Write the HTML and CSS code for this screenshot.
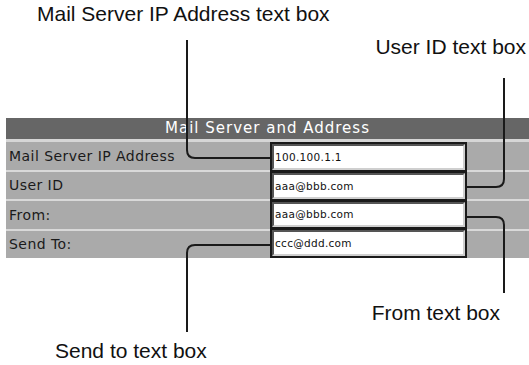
FILE: index.html
```html
<!DOCTYPE html>
<html lang="en">
<head>
  <meta charset="UTF-8">
  <title>Mail Server and Address</title>
  <link rel="stylesheet" href="styles.css">
</head>
<body>
  <div id="figure">
    <div class="callouts top">
      <div class="callout ip">Mail Server IP Address text box</div>
      <div class="callout userid">User ID text box</div>
    </div>

    <div id="panel">
      <div class="panel-title">Mail Server and Address</div>
      <div class="panel-body">
        <div class="labels">
          <div class="row">Mail Server IP Address</div>
          <div class="row">User ID</div>
          <div class="row">From:</div>
          <div class="row">Send To:</div>
        </div>
        <div class="fields">
          <div class="field">100.100.1.1</div>
          <div class="field">aaa@bbb.com</div>
          <div class="field">aaa@bbb.com</div>
          <div class="field">ccc@ddd.com</div>
        </div>
        <div class="filler">
          <div class="row"></div>
          <div class="row"></div>
          <div class="row"></div>
          <div class="row"></div>
        </div>
      </div>
    </div>

    <div class="callouts bottom">
      <div class="callout from">From text box</div>
      <div class="callout sendto">Send to text box</div>
    </div>

    <!-- leader lines -->
    <svg id="leaders" width="529" height="365" viewBox="0 0 529 365">
      <path d="M187 40 V150 Q187 158 195 158 H270" />
      <path d="M504 78 V179 Q504 187 496 187 H467" />
      <path d="M467 217 H496 Q504 217 504 225 V293" />
      <path d="M270 245 H195 Q187 245 187 253 V332" />
    </svg>
  </div>
</body>
</html>
```

FILE: styles.css
```css
body {
  margin: 0;
  background-color: #ffffff;
  font-family: "Liberation Sans", Arial, sans-serif;
  color: #111;
}

#figure {
  position: relative;
  width: 529px;
  height: 365px;
  overflow: hidden;
}

.callouts.top {
  height: 118px;
}

.callout {
  font-size: 21px;
  line-height: 24px;
}

.callout.ip {
  padding: 2px 0 0 37px;
}

.callout.userid {
  padding: 9px 0 0 0;
  text-align: right;
  margin-right: 3px;
}

#panel {
  margin-left: 6px;
  width: 523px;
}

.panel-title {
  height: 21px;
  line-height: 21px;
  background-color: #666666;
  color: #ffffff;
  text-align: center;
  font-family: "DejaVu Sans", sans-serif;
  font-size: 15px;
  letter-spacing: 1px;
  border-bottom: 3px solid #d6d6d6;
}

.panel-body {
  display: flex;
  height: 116px;
}

.labels,
.filler {
  display: flex;
  flex-direction: column;
  gap: 2px;
  background-color: #d9d9d9;
}

.labels {
  width: 264px;
}

.filler {
  flex: 1;
}

.row {
  flex: 1;
  background-color: #aaaaaa;
  font-family: "DejaVu Sans", sans-serif;
  font-size: 14px;
  letter-spacing: 0.45px;
  color: #1a1a1a;
  padding-left: 3px;
  display: flex;
  align-items: center;
}

.fields {
  width: 193px;
  background-color: #1a1a1a;
  display: flex;
  flex-direction: column;
  gap: 3px;
  padding: 2px;
}

.field {
  flex: 1;
  background-color: #ffffff;
  border-top: 2px solid #555;
  border-left: 2px solid #555;
  border-bottom: 2px solid #cfcfcf;
  border-right: 2px solid #cfcfcf;
  font-family: "DejaVu Sans", sans-serif;
  font-size: 10.5px;
  letter-spacing: 0.3px;
  color: #111;
  padding-left: 1px;
  display: flex;
  align-items: center;
}

.callouts.bottom {
  height: 107px;
}

.callout.from {
  padding: 43px 0 0 0;
  text-align: right;
  margin-right: 29px;
}

.callout.sendto {
  padding: 14px 0 0 55px;
}

#leaders {
  position: absolute;
  top: 0;
  left: 0;
  fill: none;
  stroke: #1a1a1a;
  stroke-width: 2;
}
```
